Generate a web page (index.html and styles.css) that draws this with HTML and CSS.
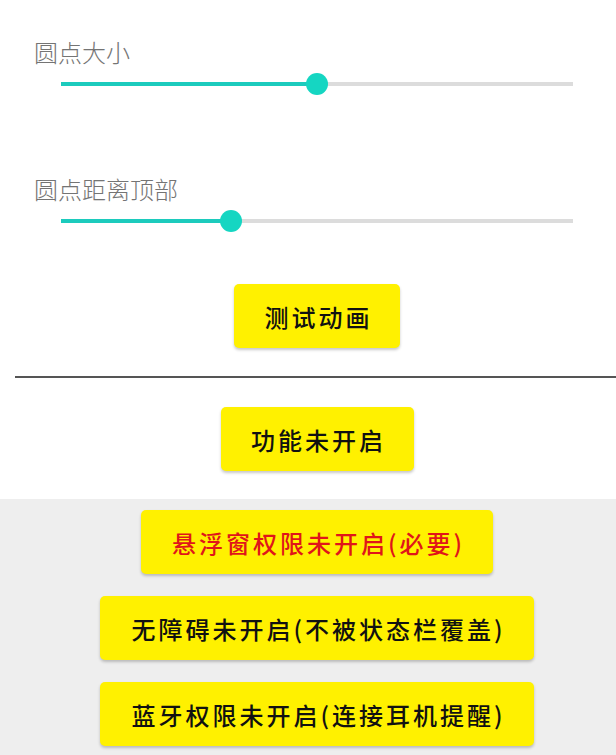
FILE: index.html
```html
<!DOCTYPE html>
<html lang="zh-CN">
<head>
<meta charset="utf-8">
<link rel="stylesheet" href="styles.css">
</head>
<body>
<div class="page">
  <section class="top">
    <div class="label first">圆点大小</div>
    <div class="slider">
      <div class="track">
        <div class="fill" style="width:50%"></div>
        <div class="thumb" style="left:50%"></div>
      </div>
    </div>
    <div class="label second">圆点距离顶部</div>
    <div class="slider">
      <div class="track">
        <div class="fill" style="width:33.2%"></div>
        <div class="thumb" style="left:33.2%"></div>
      </div>
    </div>
    <div class="row test-row"><button class="btn test">测试动画</button></div>
    <div class="divider"></div>
    <div class="row func-row"><button class="btn func">功能未开启</button></div>
  </section>
  <section class="perm">
    <button class="btn red">悬浮窗权限未开启(必要)</button>
    <button class="btn wide">无障碍未开启(不被状态栏覆盖)</button>
    <button class="btn wide">蓝牙权限未开启(连接耳机提醒)</button>
  </section>
</div>
</body>
</html>
```

FILE: styles.css
```css
html, body {
  margin: 0;
  padding: 0;
  background: #ffffff;
}
body {
  font-family: "Noto Sans CJK SC", "Noto Sans", sans-serif;
  width: 616px;
  height: 755px;
  overflow: hidden;
}
.page {
  display: flex;
  flex-direction: column;
  height: 755px;
}
.top {
  display: flex;
  flex-direction: column;
  padding-top: 38px;
}
.label {
  font-size: 24px;
  line-height: 28px;
  height: 28px;
  color: #747474;
  font-weight: 300;
  padding-left: 34px;
}
.label.second {
  margin-top: 80px;
}
.slider {
  height: 22px;
  margin-top: 7px;
  padding: 0 43px 0 61px;
  display: flex;
  align-items: center;
}
.track {
  position: relative;
  flex: 1;
  height: 4px;
  background: #dcdcdc;
}
.fill {
  height: 4px;
  background: #1ccbbd;
}
.thumb {
  position: absolute;
  top: 50%;
  width: 22px;
  height: 22px;
  margin: -11px 0 0 -11px;
  border-radius: 50%;
  background: #15d6c2;
}
.row {
  display: flex;
  justify-content: center;
  padding-left: 18px;
}
.test-row {
  margin-top: 52px;
}
.btn {
  font-family: "Noto Sans CJK SC", "Noto Sans", sans-serif;
  font-size: 24px;
  font-weight: 500;
  letter-spacing: 3px;
  text-indent: 3px;
  color: #111111;
  background: #fff100;
  border: none;
  border-radius: 5px;
  height: 64px;
  padding: 0;
  box-shadow: 0 2px 3px rgba(0, 0, 0, 0.22);
  display: flex;
  align-items: center;
  justify-content: center;
  white-space: nowrap;
}
.btn.test {
  width: 166px;
}
.btn.func {
  width: 193px;
}
.divider {
  height: 2px;
  background: #555555;
  margin: 28px 0 0 15px;
}
.func-row {
  margin-top: 29px;
}
.perm {
  flex: 1;
  margin-top: 28px;
  background: #eeeeee;
  display: flex;
  flex-direction: column;
  align-items: center;
  gap: 22px;
  padding: 11px 0 0 18px;
}
.btn.red {
  color: #e0151a;
  width: 352px;
}
.btn.wide {
  width: 434px;
}
```
